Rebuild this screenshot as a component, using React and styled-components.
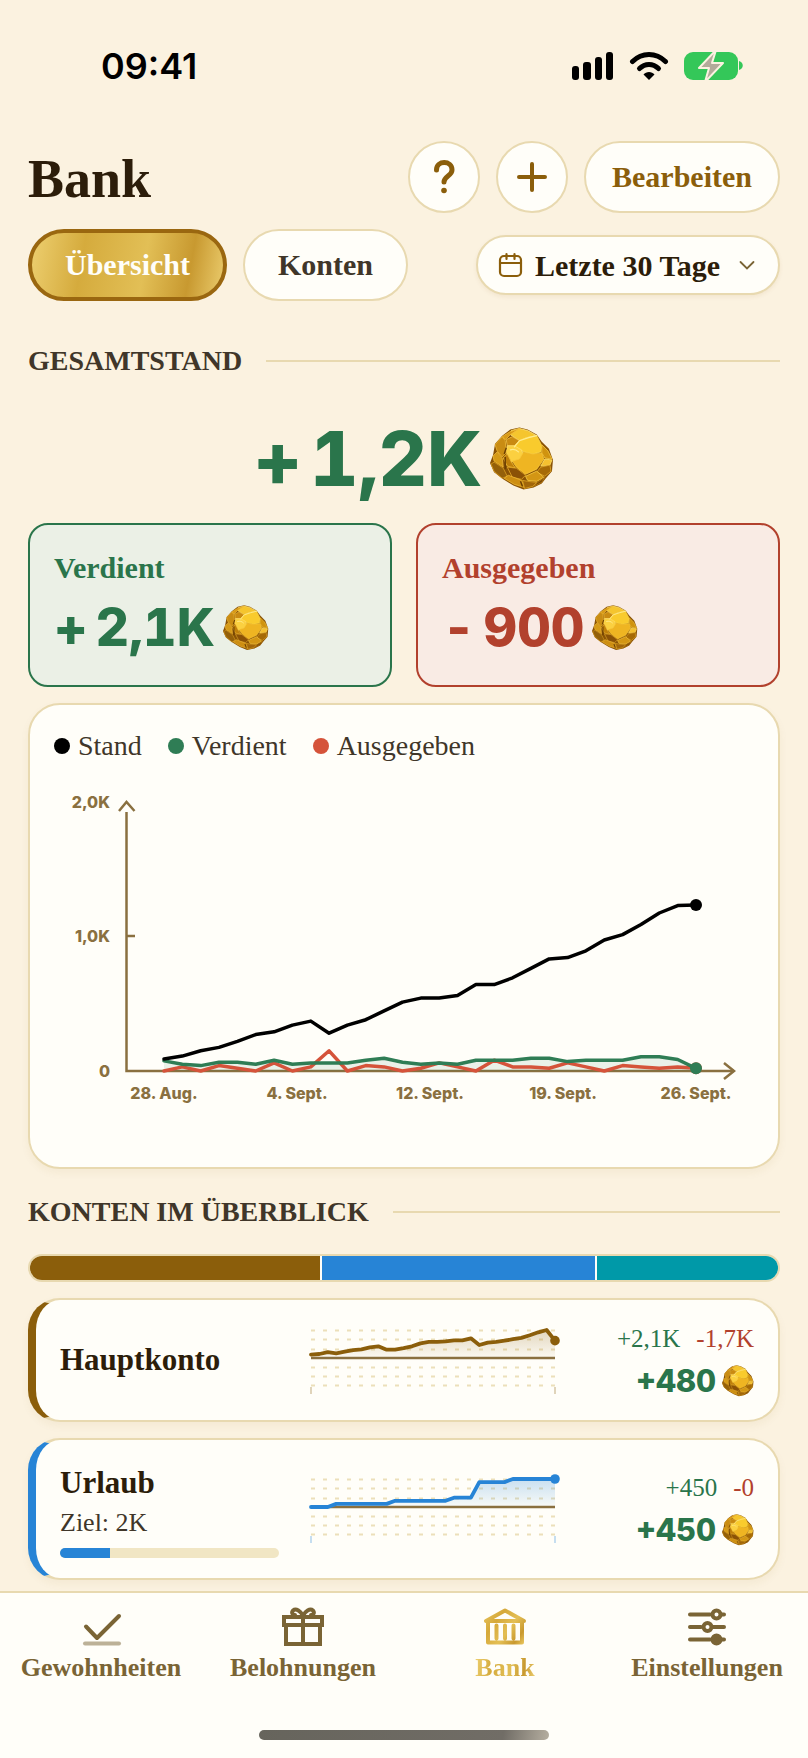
import React, { useId, useState } from "react";
import styled, { createGlobalStyle, css, ThemeProvider } from "styled-components";

const theme = {
    serif: `"Liberation Serif", "Times New Roman", serif`,
    sans: `Inter, "Liberation Sans", sans-serif`,
    background: "#fbf2e0",
    surface: "#fffef9",
    border: "#e8d9b0",
    ink: "#2c1d0a",
    inkSoft: "#403629",
    muted: "#7a6435",
    axis: "#8a7040",
    brown: "#8b5e0b",
    green: "#2a754b",
    red: "#b2412d",
    blue: "#2784d6",
    teal: "#0099a8",
    gold: "linear-gradient(100deg, #efd274 0%, #d5ab3d 28%, #e2bf56 58%, #c89930 80%, #efd274 100%)",
};

const GlobalStyle = createGlobalStyle`
    *, *::before, *::after {
        box-sizing: border-box;
    }

    body {
        margin: 0;
        background: #fbf2e0;
    }

    button, select {
        font: inherit;
        color: inherit;
        cursor: pointer;
    }
`;

const StyledApp = styled.div`
    display: flex;
    flex-direction: column;
    min-height: 100vh;
    background: ${({ theme }) => theme.background};
    color: ${({ theme }) => theme.ink};
    font-family: ${({ theme }) => theme.serif};
`;

const StyledStatusBar = styled.div`
    display: flex;
    align-items: center;
    justify-content: space-between;
    height: 132px;
    padding: 0 64px 0 101px;
    color: #000;

    time {
        font: 600 36px/36px ${({ theme }) => theme.sans};
    }

    .indicators {
        display: flex;
        align-items: center;
        gap: 15px;
    }
`;

const Main = styled.main`
    display: flex;
    flex-direction: column;
    gap: 16px;
    padding: 9px 28px 8px;
`;

const Toolbar = styled.div`
    display: flex;
    align-items: center;
    justify-content: space-between;

    h1 {
        margin: 0;
        padding-top: 4px;
        font-size: 54px;
        line-height: 60px;
    }
`;

const ButtonRow = styled.div`
    display: flex;
    gap: 16px;
`;

const PillButton = styled.button`
    display: flex;
    align-items: center;
    justify-content: center;
    height: 72px;
    min-width: 72px;
    padding: 0 ${({ $padding }) => $padding || 0}px;
    border: 2px solid ${({ theme }) => theme.border};
    border-radius: 36px;
    background: ${({ theme }) => theme.surface};
    color: ${({ theme }) => theme.brown};
    font-size: 30px;
    font-weight: 700;
`;

const TabButton = styled(PillButton)`
    color: ${({ theme }) => theme.inkSoft};

    ${({ $active, theme }) =>
        $active &&
        css`
            border: 4px solid #9a6710;
            background: ${theme.gold};
            background-origin: border-box;
            color: ${theme.surface};
        `}
`;

const StyledPeriod = styled.label`
    position: relative;
    display: flex;
    align-items: center;

    select {
        appearance: none;
        height: 60px;
        padding: 0 57px 0 57px;
        border: 2px solid ${({ theme }) => theme.border};
        border-radius: 30px;
        background: ${({ theme }) => theme.surface};
        box-shadow: 0 2px 4px rgba(139, 94, 11, 0.08);
        color: ${({ theme }) => theme.ink};
        font-size: 30px;
        font-weight: 700;
    }

    svg {
        position: absolute;
        pointer-events: none;
    }

    .calendar {
        left: 22px;
    }

    .chevron {
        right: 24px;
    }
`;

const SectionTitle = styled.h2`
    display: flex;
    align-items: center;
    gap: 24px;
    margin: ${({ $top }) => $top}px 0 0;
    color: ${({ theme }) => theme.inkSoft};
    font-size: 28px;
    line-height: 36px;
    text-transform: uppercase;

    &::after {
        content: "";
        flex: 1;
        height: 2px;
        background: ${({ theme }) => theme.border};
    }
`;

const Amount = styled.div`
    display: flex;
    align-items: center;
    gap: ${({ $gap }) => $gap || 8}px;
    color: ${({ theme, $tone }) => theme[$tone]};
    font: 800 ${({ $size }) => $size}px / ${({ $line }) => $line}px ${({ theme }) => theme.sans};
    font-variant-numeric: tabular-nums;
    white-space: nowrap;
`;

const TotalAmount = styled(Amount)`
    justify-content: center;
    padding: 24px 0 8px;
`;

const SummaryGrid = styled.div`
    display: grid;
    grid-template-columns: 1fr 1fr;
    gap: 24px;
`;

const SummaryCard = styled.section`
    display: flex;
    flex-direction: column;
    gap: 12px;
    padding: 25px 24px 27px;
    border: 2px solid ${({ theme, $tone }) => theme[$tone]};
    border-radius: 20px;
    background: ${({ $fill }) => $fill};

    h3 {
        margin: 0;
        color: ${({ theme, $tone }) => theme[$tone]};
        font-size: 30px;
        line-height: 36px;
    }
`;

const Card = styled.section`
    border: 2px solid ${({ theme }) => theme.border};
    border-radius: 32px;
    background: ${({ theme }) => theme.surface};
    box-shadow: 0 4px 8px rgba(139, 94, 11, 0.06);
`;

const ChartCard = styled(Card)`
    padding: 24px;

    svg {
        display: block;
        width: 100%;
        margin-top: 16px;
    }

    text {
        fill: ${({ theme }) => theme.axis};
        font: 800 16px ${({ theme }) => theme.sans};
    }
`;

const Legend = styled.ul`
    display: flex;
    gap: 26px;
    margin: 0;
    padding: 0;
    list-style: none;
    color: ${({ theme }) => theme.inkSoft};
    font-size: 28px;
    line-height: 34px;
`;

const LegendItem = styled.li`
    display: flex;
    align-items: center;
    gap: 8px;

    &::before {
        content: "";
        width: 16px;
        height: 16px;
        border-radius: 50%;
        background: ${({ $color }) => $color};
    }
`;

const ShareBar = styled.div`
    display: flex;
    gap: 2px;
    height: 28px;
    margin-top: 8px;
    border: 2px solid ${({ theme }) => theme.border};
    border-radius: 14px;
    background: ${({ theme }) => theme.surface};
    overflow: hidden;
`;

const Share = styled.span`
    flex: ${({ $value }) => $value} 0 0;
    background: ${({ theme, $tone }) => theme[$tone]};
`;

const AccountCard = styled(Card)`
    display: grid;
    grid-template-columns: minmax(0, 21fr) 260px minmax(0, 16fr);
    align-items: center;
    gap: 24px;
    padding: 20px 24px;
    border-left: 8px solid ${({ theme, $tone }) => theme[$tone]};

    svg {
        display: block;
    }
`;

const AccountInfo = styled.div`
    h3 {
        margin: 0;
        font-size: 31px;
        line-height: 46px;
    }

    p {
        margin: 0 0 8px;
        color: ${({ theme }) => theme.inkSoft};
        font-size: 26px;
        line-height: 34px;
    }
`;

const Goal = styled.div`
    height: 10px;
    border-radius: 5px;
    background: #f1e6c4;
    overflow: hidden;

    div {
        height: 100%;
        background: ${({ theme, $tone }) => theme[$tone]};
    }
`;

const AccountFigures = styled.div`
    display: flex;
    flex-direction: column;
    align-items: flex-end;
    gap: 6px;
`;

const Flows = styled.div`
    display: flex;
    gap: 16px;
    font-size: 25px;
    line-height: 36px;
    color: ${({ theme }) => theme.green};

    span + span {
        color: ${({ theme }) => theme.red};
    }
`;

const TabBar = styled.footer`
    margin-top: auto;
    padding: 10px 0 18px;
    border-top: 2px solid ${({ theme }) => theme.border};
    background: ${({ theme }) => theme.surface};

    nav {
        display: grid;
        grid-template-columns: repeat(4, 1fr);
    }
`;

const NavLink = styled.a`
    display: flex;
    flex-direction: column;
    align-items: center;
    gap: 7px;
    color: ${({ theme }) => theme.muted};
    font-size: 26px;
    font-weight: 700;
    line-height: 28px;
    text-decoration: none;

    ${({ $active, theme }) =>
        $active &&
        css`
            span {
                background: ${theme.gold};
                background-clip: text;
                color: transparent;
            }
        `}
`;

const HomeIndicator = styled.div`
    width: 36%;
    height: 10px;
    margin: 48px auto 0;
    border-radius: 5px;
    background: linear-gradient(100deg, #66645c 0%, #716d66 84%, #b5aea0 100%);
`;

const DAYS = 30;

const balance = [
    90, 110, 150, 175, 220, 270, 290, 340, 370, 280, 340, 380, 445, 510, 540, 540, 560, 640, 640, 690, 760, 830, 840, 890, 970, 1010,
    1085, 1170, 1225, 1230,
];
const earned = [
    75, 50, 40, 65, 65, 50, 80, 50, 60, 60, 60, 80, 95, 65, 50, 60, 50, 80, 80, 80, 95, 95, 70, 80, 80, 80, 105, 105, 85, 20,
];
const spent = [0, 30, 0, 40, 20, 0, 60, 0, 30, 150, 0, 40, 30, 0, 20, 60, 30, 0, 80, 30, 30, 20, 60, 30, 0, 40, 30, 20, 30, 20];

const accounts = [
    {
        name: "Hauptkonto",
        tone: "brown",
        earned: "+2,1K",
        spent: "-1,7K",
        total: "+480",
        history: [
            90, 110, 160, 130, 175, 220, 240, 295, 325, 230, 230, 270, 325, 405, 445, 445, 460, 490, 490, 545, 360, 425, 445, 480, 520,
            555, 630, 710, 775, 480,
        ],
    },
    {
        name: "Urlaub",
        tone: "blue",
        earned: "+450",
        spent: "-0",
        total: "+450",
        goal: "2K",
        progress: 23,
        history: [
            0, 0, 0, 50, 50, 50, 50, 50, 50, 50, 100, 100, 100, 100, 100, 100, 100, 150, 150, 150, 400, 400, 400, 400, 450, 450, 450, 450,
            450, 450,
        ],
    },
];

const shares = [
    { tone: "brown", value: 480 },
    { tone: "blue", value: 450 },
    { tone: "teal", value: 300 },
];

// Turns a series into svg points between two x positions, measured up from the base line
const toPoints = (values, { left, right, base, scale }) =>
    values.map((v, i) => [left + (i * (right - left)) / (DAYS - 1), base - v * scale]);

const toString = (points) => points.map(([x, y]) => `${x.toFixed(1)},${y.toFixed(1)}`).join(" ");

const Nugget = ({ size }) => (
    <svg width={size} height={size} viewBox="0 0 63 62" aria-hidden="true">
        <path d="M29 0 37 2 46 7 51 14 58 21 62 32 61 43 55 50 51 55 43 59 33 61 23 57 13 51 4 44 0 35 3 27 5 16 12 8 20 2Z" fill="#8a5305" />
        <g strokeLinejoin="round" strokeWidth="0.8">
            <path d="M29 1 37 3 46 8 36 10 29 13 20 7 21 3Z" fill="#f5c52e" stroke="#ffe680" />
            <path d="M20 4 29 1 20 7 15 12 12 9Z" fill="#d99a16" stroke="#f0bd3e" />
            <path d="M16 12 22 9 29 13 24 18 17 18Z" fill="#c98a12" stroke="#f3c244" />
            <path d="M29 13 36 10 46 8 51 18 50 24 42 26 34 24 25 21 24 18Z" fill="#f9cb2d" stroke="#fcd848" />
            <path d="M17 18 24 18 31 22 33 27 27 33 20 34 16 24Z" fill="#fbd040" stroke="#ffe070" />
            <path d="M33 24 42 26 51 25 53 31 46 41 35 46 26 39 22 33 29 31Z" fill="#efb522" stroke="#f8c83a" />
            <path d="M51 17 57 23 61 31 54 30 51 25Z" fill="#d0930f" stroke="#f6c840" />
            <path d="M54 31 61 32 59 37 50 38Z" fill="#f4c030" stroke="#ffe06a" />
            <path d="M50 39 59 37 60 43 54 48 46 44Z" fill="#a66a06" stroke="#e2a829" />
            <path d="M12 9 15 13 16 25 12 29 7 23 5 17Z" fill="#c98c13" stroke="#efba35" />
            <path d="M7 24 12 30 13 39 4 33 3 28Z" fill="#d59a18" stroke="#edb63a" />
            <path d="M4 34 13 40 17 48 12 50 4 43 1 36Z" fill="#94600a" stroke="#d79d20" />
            <path d="M13 30 17 26 21 34 25 40 17 38Z" fill="#bf7f0a" stroke="#f0bb38" />
            <path d="M17 39 26 40 35 47 31 51 22 49Z" fill="#8b5206" stroke="#e5aa28" />
            <path d="M35 48 46 43 53 49 46 53 37 52Z" fill="#d39614" stroke="#f9cc45" />
            <path d="M14 50 18 47 31 52 34 59 24 56Z" fill="#cd8e12" stroke="#edb735" />
            <path d="M32 52 37 53 46 54 42 58 34 60Z" fill="#a1660a" stroke="#dca323" />
            <path d="M47 54 54 49 51 54 43 58Z" fill="#7a4804" stroke="#b67b13" />
        </g>
        <path d="M20 22c3-1 6 0 8 2M24 19 29 13 38 10 46 8" stroke="#ffec90" strokeWidth="1.2" fill="none" strokeLinecap="round" />
        <path d="M15 29v12M16 20l-2 6M30 53l2 5" stroke="#6b3f03" strokeWidth="1.4" fill="none" />
    </svg>
);

const StatusBar = () => (
    <StyledStatusBar>
        <time>09:41</time>
        <div className="indicators">
            <svg width="42" height="30" viewBox="0 0 42 30" aria-hidden="true">
                <rect y="15" width="7" height="14" rx="3" />
                <rect x="11" y="11" width="8" height="18" rx="3" />
                <rect x="23" y="6" width="7" height="23" rx="3" />
                <rect x="34" y="1" width="7" height="28" rx="3" />
            </svg>
            <svg width="40" height="30" viewBox="0 0 40 30" fill="none" stroke="#000" strokeWidth="5" strokeLinecap="round" aria-hidden="true">
                <path d="M3.5 10.5C13 1 27 1 36.5 10.5" />
                <path d="M10.5 17.5C16 12 24 12 29.5 17.5" />
                <path d="M14.5 23.5C17 20 23 20 25.5 23.5L20 29Z" fill="#000" stroke="none" />
            </svg>
            <svg width="60" height="30" viewBox="0 0 60 30" aria-hidden="true">
                <rect y="1" width="54" height="28" rx="9" fill="#34c759" />
                <path d="M55 10c5 1 5 8 0 9Z" fill="#34c759" />
                <path d="M32-1 15 17h10l-4 14 18-19H28l4-13Z" fill="#b3aa9a" stroke="#fbf2e0" strokeWidth="2" strokeLinejoin="round" />
            </svg>
        </div>
    </StyledStatusBar>
);

const HelpIcon = () => (
    <svg width="36" height="36" viewBox="0 0 36 36" fill="none" stroke="currentColor" strokeWidth="5" strokeLinecap="round" aria-hidden="true">
        <path d="M10.5 11C10.500 1 26 1 26 11 26 17 18 17 18 23" />
        <circle cx="18" cy="31.5" r="2.8" fill="currentColor" stroke="none" />
    </svg>
);

const PlusIcon = () => (
    <svg width="36" height="36" viewBox="0 0 36 36" fill="none" stroke="currentColor" strokeWidth="4" strokeLinecap="round" aria-hidden="true">
        <path d="M18 5v26M5 18h26" />
    </svg>
);

const PeriodSelect = () => (
    <StyledPeriod>
        <svg className="calendar" width="26" height="26" viewBox="0 0 26 26" fill="none" stroke="#8b5e0b" strokeWidth="2.2" strokeLinecap="round">
            <rect x="2" y="4" width="21" height="20" rx="4" />
            <path d="M2 11h21M8.5 2v5M16.5 2v5" />
        </svg>
        <select aria-label="Zeitraum" defaultValue="30">
            <option value="30">Letzte 30 Tage</option>
            <option value="7">Letzte 7 Tage</option>
        </select>
        <svg className="chevron" width="18" height="12" viewBox="0 0 18 12" fill="none" stroke="#7a6435" strokeWidth="1.8" strokeLinecap="round">
            <path d="M2.5 3 9 9.500 15.5 3" />
        </svg>
    </StyledPeriod>
);

const yTicks = [
    { label: "2,0K", y: 23 },
    { label: "1,0K", y: 157 },
    { label: "0", y: 292 },
];
const xTicks = ["28. Aug.", "4. Sept.", "12. Sept.", "19. Sept.", "26. Sept."];

const BalanceChart = () => {
    const area = { left: 110, right: 642, base: 292, scale: 0.135 };
    const series = [
        { values: spent, color: "#d5533a" },
        { values: earned, color: "#2f7d55" },
        { values: balance, color: "#000" },
    ];

    return (
        <svg viewBox="0 0 700 364" role="img" aria-label="Verlauf">
            <g fill="none" stroke="#8a7040" strokeWidth="2.5">
                <path d="M72.5 33V292H680" />
                <path d="M65 32 72.5 23 80.5 32M670 284l10 8-10 8M73 157h8" />
            </g>
            {yTicks.map(({ label, y }) => (
                <text key={label} x="56" y={y + 6} textAnchor="end">
                    {label}
                </text>
            ))}
            {xTicks.map((label, i) => (
                <text key={label} x={area.left + i * 133} y="320" textAnchor="middle">
                    {label}
                </text>
            ))}
            <polygon points={`110,292 ${toString(toPoints(earned, area))} 642,292`} fill="#2f7d55" opacity="0.1" />
            {series.map(({ values, color }) => {
                const points = toPoints(values, area);
                const [x, y] = points[points.length - 1];
                return (
                    <g key={color}>
                        <polyline points={toString(points)} fill="none" stroke={color} strokeWidth="3.5" strokeLinejoin="round" strokeLinecap="round" />
                        <circle cx={x} cy={y} r="6" fill={color} />
                    </g>
                );
            })}
        </svg>
    );
};

const Sparkline = ({ values, color }) => {
    const id = useId();
    const points = toPoints(values, { left: 8, right: 252, base: 38, scale: 28 / Math.max(...values) });
    const [x, y] = points[points.length - 1];

    return (
        <svg width="260" height="80" viewBox="0 0 260 80" aria-hidden="true">
            <linearGradient id={id} x1="0" y1="0" x2="0" y2="1">
                <stop offset="0" stopColor={color} stopOpacity="0.25" />
                <stop offset="1" stopColor={color} stopOpacity="0.03" />
            </linearGradient>
            {[10, 19, 29, 47, 56, 65].map((line) => (
                <path key={line} d={`M8 ${line + 0.5}H252`} stroke="#ecdfba" strokeWidth="1.8" strokeDasharray="4 8" />
            ))}
            <path d="M8 67v7M252 67v7" stroke={color} strokeWidth="1.5" opacity="0.35" />
            <polygon points={`8,38 ${toString(points)} 252,38`} fill={`url(#${id})`} />
            <path d="M8 38H252" stroke="#8a7040" strokeWidth="2.5" />
            <polyline points={toString(points)} fill="none" stroke={color} strokeWidth="3.8" strokeLinejoin="round" strokeLinecap="round" />
            <circle cx={x} cy={y} r="4.8" fill={color} />
        </svg>
    );
};

const Account = ({ account }) => {
    const { name, tone, goal, progress, history } = account;

    return (
        <AccountCard $tone={tone}>
            <AccountInfo>
                <h3>{name}</h3>
                {goal && (
                    <React.Fragment>
                        <p>Ziel: {goal}</p>
                        <Goal $tone={tone} role="progressbar" aria-label={`Ziel ${name}`} aria-valuenow={progress}>
                            <div style={{ width: `${progress}%` }} />
                        </Goal>
                    </React.Fragment>
                )}
            </AccountInfo>
            <Sparkline values={history} color={theme[tone]} />
            <AccountFigures>
                <Flows>
                    <span>{account.earned}</span>
                    <span>{account.spent}</span>
                </Flows>
                <Amount $tone="green" $size={31} $line={36} $gap={6}>
                    {account.total}
                    <Nugget size={32} />
                </Amount>
            </AccountFigures>
        </AccountCard>
    );
};

const NavIcon = ({ children, ...rest }) => (
    <svg width="44" height="44" viewBox="0 0 44 44" fill="none" stroke="currentColor" strokeWidth="4" strokeLinecap="round" strokeLinejoin="round" {...rest}>
        {children}
    </svg>
);

const navItems = [
    {
        label: "Gewohnheiten",
        icon: (
            <NavIcon>
                <path d="M7 23.5 18 35 40 13" />
                <path d="M6 40.5h34" opacity="0.5" />
            </NavIcon>
        ),
    },
    {
        label: "Belohnungen",
        icon: (
            <NavIcon>
                <path d="M3 14h38v8H3zM5 22h34v19H5zM22 14v26" strokeLinejoin="miter" />
                <path d="M22 13C20 8 15 5 12 7.500 10 10 12 12 14 12M22 13c2-5 7-8 10-5.500 2 2.500 0 4.500-2 4.500" />
            </NavIcon>
        ),
    },
    {
        label: "Bank",
        active: true,
        icon: (
            <NavIcon stroke="url(#bankGold)">
                <linearGradient id="bankGold" gradientUnits="userSpaceOnUse" x1="2" y1="8" x2="42" y2="38">
                    <stop offset="0" stopColor="#e6c25a" />
                    <stop offset="0.3" stopColor="#d6a93a" />
                    <stop offset="0.6" stopColor="#e4bf55" />
                    <stop offset="0.85" stopColor="#c9992f" />
                    <stop offset="1" stopColor="#e6c25a" />
                </linearGradient>
                <path d="M22 7.500 3 18h38ZM5 18v21.500h34V18M13.5 22.500v13M22 22.500v13M30.5 22.500v13" />
            </NavIcon>
        ),
    },
    {
        label: "Einstellungen",
        icon: (
            <NavIcon>
                <path d="M5 11.500h20M37 11.500h2M5 24h11M28 24h11M5 36.500h20M37 36.500h2" />
                <circle cx="31.5" cy="11.5" r="4" />
                <circle cx="22.5" cy="24" r="4" />
                <circle cx="31.5" cy="36.5" r="4" fill="currentColor" />
            </NavIcon>
        ),
    },
];

const App = () => {
    const [tab, setTab] = useState("Übersicht");

    return (
        <ThemeProvider theme={theme}>
            <GlobalStyle />
            <StyledApp>
                <StatusBar />
                <Main>
                    <Toolbar>
                        <h1>Bank</h1>
                        <ButtonRow>
                            <PillButton aria-label="Hilfe">
                                <HelpIcon />
                            </PillButton>
                            <PillButton aria-label="Hinzufügen">
                                <PlusIcon />
                            </PillButton>
                            <PillButton $padding={26}>Bearbeiten</PillButton>
                        </ButtonRow>
                    </Toolbar>
                    <Toolbar>
                        <ButtonRow>
                            {["Übersicht", "Konten"].map((name) => (
                                <TabButton key={name} $padding={33} $active={tab === name} onClick={() => setTab(name)}>
                                    {name}
                                </TabButton>
                            ))}
                        </ButtonRow>
                        <PeriodSelect />
                    </Toolbar>

                    <SectionTitle $top={26}>Gesamtstand</SectionTitle>
                    <TotalAmount $tone="green" $size={75} $line={80}>
                        <span>+</span>
                        <span>1,2K</span>
                        <Nugget size={64} />
                    </TotalAmount>
                    <SummaryGrid>
                        <SummaryCard $tone="green" $fill="#ebf0e6">
                            <h3>Verdient</h3>
                            <Amount $tone="green" $size={52} $line={60}>
                                <span>+</span>
                                <span>2,1K</span>
                                <Nugget size={46} />
                            </Amount>
                        </SummaryCard>
                        <SummaryCard $tone="red" $fill="#f9ebe4">
                            <h3>Ausgegeben</h3>
                            <Amount $tone="red" $size={52} $line={60}>
                                <span>-</span>
                                <span>900</span>
                                <Nugget size={46} />
                            </Amount>
                        </SummaryCard>
                    </SummaryGrid>
                    <ChartCard>
                        <Legend>
                            <LegendItem $color="#000">Stand</LegendItem>
                            <LegendItem $color="#2f7d55">Verdient</LegendItem>
                            <LegendItem $color="#d5533a">Ausgegeben</LegendItem>
                        </Legend>
                        <BalanceChart />
                    </ChartCard>

                    <SectionTitle $top={9}>Konten im Überblick</SectionTitle>
                    <ShareBar>
                        {shares.map(({ tone, value }) => (
                            <Share key={tone} $tone={tone} $value={value} />
                        ))}
                    </ShareBar>
                    {accounts.map((account) => (
                        <Account key={account.name} account={account} />
                    ))}
                </Main>
                <TabBar>
                    <nav>
                        {navItems.map(({ label, icon, active }) => (
                            <NavLink key={label} href={`#${label.toLowerCase()}`} $active={active}>
                                {icon}
                                <span>{label}</span>
                            </NavLink>
                        ))}
                    </nav>
                    <HomeIndicator />
                </TabBar>
            </StyledApp>
        </ThemeProvider>
    );
};

export default App;
